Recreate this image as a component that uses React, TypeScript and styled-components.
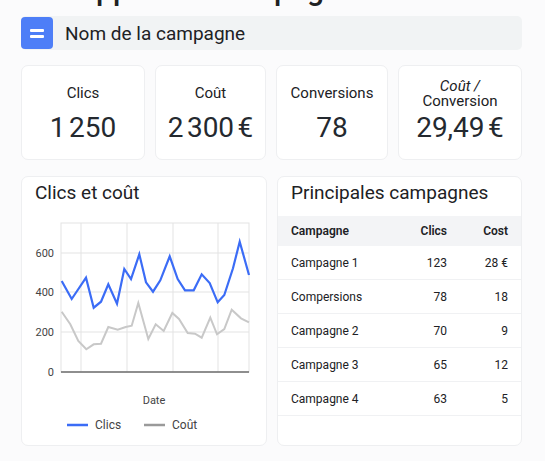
import React from 'react';
import styled, { createGlobalStyle } from 'styled-components';

const Global = createGlobalStyle`
  body { margin: 0; background: #fbfbfc; font-family: Roboto, "Liberation Sans", sans-serif; color: #202124; }
`;

const Page = styled.div`
  width: 545px;
  height: 461px;
  overflow: hidden;
  padding: 0 23px 0 21px;
  box-sizing: border-box;
`;

const Title = styled.h1`
  margin: -27px 0 0;
  height: 34px;
  font-size: 30px;
  font-weight: 500;
  line-height: 34px;
  padding-left: 40px;
`;

const NameBar = styled.div`
  margin-top: 9px;
  height: 34px;
  background: #f1f3f4;
  border-radius: 5px;
  display: flex;
  align-items: center;
  gap: 12px;
  font-size: 19px;
`;

const MenuIcon = styled.div`
  width: 32px;
  height: 32px;
  border-radius: 4px;
  background: #4d7ef7;
  display: flex;
  flex-direction: column;
  justify-content: center;
  align-items: center;
  gap: 3px;
  & span { width: 14px; height: 3px; background: #fff; border-radius: 1px; }
`;

const Kpis = styled.div`
  margin-top: 15px;
  display: grid;
  grid-template-columns: 124px 111px 112px 124px;
  justify-content: space-between;
`;

const Card = styled.div`
  background: #fff;
  border: 1px solid #eeeff1;
  border-radius: 7px;
  box-sizing: border-box;
`;

const Kpi = styled(Card)`
  height: 95px;
  display: flex;
  flex-direction: column;
  align-items: center;
  justify-content: center;
`;

const KpiLabel = styled.div`
  font-size: 15px;
  line-height: 15px;
  height: 34px;
  display: flex;
  align-items: center;
  text-align: center;
  margin-top: -4px;
`;

const KpiValue = styled.div`
  font-size: 28px;
  line-height: 34px;
  color: #24292f;
`;

const Bottom = styled.div`
  margin-top: 16px;
  display: grid;
  grid-template-columns: 246px 245px;
  justify-content: space-between;
`;

const Panel = styled(Card)`
  height: 270px;
  overflow: hidden;
`;

const PanelTitle = styled.div`
  font-size: 19px;
  padding: 4px 13px 0;
  height: 33px;
  box-sizing: border-box;
`;

const Table = styled.table`
  width: 100%;
  border-collapse: collapse;
  margin-top: 6px;
  font-size: 12px;
  & th { background: #f3f4f6; font-weight: 600; height: 30px; }
  & td { height: 33px; border-bottom: 1px solid #f0f1f3; }
  & th, & td { padding: 0 13px; text-align: right; }
  & th:first-child, & td:first-child { text-align: left; }
  & th:nth-child(2), & td:nth-child(2) { padding-right: 12px; }
`;

const clics = [[122,318],[152,372],[195,308],[218,398],[240,380],[262,328],[288,386],[310,282],[330,312],[355,238],[375,322],[396,350],[418,316],[428,290],[446,244],[470,312],[492,346],[518,346],[542,298],[566,324],[590,382],[610,360],[636,280],[656,200],[684,300]];
const cout = [[122,410],[148,448],[172,498],[196,523],[218,508],[240,506],[262,456],[290,464],[314,456],[332,452],[352,384],[382,492],[404,448],[428,468],[454,414],[474,432],[500,474],[522,476],[542,488],[568,428],[588,478],[610,462],[632,404],[660,430],[684,442]];
const pts = (a: number[][]) => a.map(([x, y]) => `${(x / 3 - 1).toFixed(1)},${(y / 3 - 35).toFixed(1)}`).join(' ');

function Chart() {
  const yTicks = [[0, 162], [200, 122], [400, 82], [600, 43]];
  const xs = [59, 105, 151, 196];
  return (
    <svg width="246" height="232" style={{ display: 'block' }}>
      <rect x="39" y="13" width="188" height="149" fill="none" stroke="#e3e3e3" />
      {yTicks.map(([v, y]) => (
        <g key={v}>
          <line x1="39" x2="227" y1={y} y2={y} stroke="#e3e3e3" />
          <text x="32" y={y + 4} fontSize="11" textAnchor="end" fill="#444">{v}</text>
        </g>
      ))}
      {xs.map(x => <line key={x} x1={x} x2={x} y1="13" y2="162" stroke="#e3e3e3" />)}
      <line x1="39" x2="227" y1="162" y2="162" stroke="#333" />
      <polyline points={pts(cout)} fill="none" stroke="#c8c8c8" strokeWidth="2" />
      <polyline points={pts(clics)} fill="none" stroke="#3b6cf6" strokeWidth="2.2" />
      <text x="132" y="194" fontSize="11" textAnchor="middle" fill="#444">Date</text>
      <line x1="45" x2="66" y1="215" y2="215" stroke="#3b6cf6" strokeWidth="2.5" />
      <text x="73" y="219" fontSize="12" fill="#444">Clics</text>
      <line x1="122" x2="143" y1="215" y2="215" stroke="#9a9a9a" strokeWidth="2.5" />
      <text x="150" y="219" fontSize="12" fill="#444">Coût</text>
    </svg>
  );
}

const rows = [
  ['Campagne 1', '123', '28 €'],
  ['Compersions', '78', '18'],
  ['Campagne 2', '70', '9'],
  ['Campagne 3', '65', '12'],
  ['Campagne 4', '63', '5'],
];

export default function App() {
  return (
    <Page>
      <Global />
      <Title>Rapport de campagne</Title>
      <NameBar>
        <MenuIcon><span /><span /></MenuIcon>
        Nom de la campagne
      </NameBar>
      <Kpis>
        <Kpi><KpiLabel>Clics</KpiLabel><KpiValue>1{'\u202f'}250</KpiValue></Kpi>
        <Kpi><KpiLabel>Coût</KpiLabel><KpiValue>2{'\u202f'}300{'\u202f'}€</KpiValue></Kpi>
        <Kpi><KpiLabel>Conversions</KpiLabel><KpiValue>78</KpiValue></Kpi>
        <Kpi><KpiLabel><span><i>Coût /</i><br />Conversion</span></KpiLabel><KpiValue>29,49{'\u202f'}€</KpiValue></Kpi>
      </Kpis>
      <Bottom>
        <Panel>
          <PanelTitle>Clics et coût</PanelTitle>
          <Chart />
        </Panel>
        <Panel>
          <PanelTitle>Principales campagnes</PanelTitle>
          <Table>
            <thead><tr><th>Campagne</th><th>Clics</th><th>Cost</th></tr></thead>
            <tbody>
              {rows.map(r => <tr key={r[0]}>{r.map((c, i) => <td key={i}>{c}</td>)}</tr>)}
            </tbody>
          </Table>
        </Panel>
      </Bottom>
    </Page>
  );
}
